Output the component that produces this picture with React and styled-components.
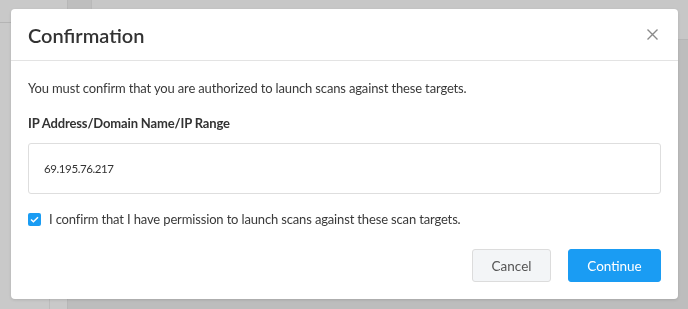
import styled, { createGlobalStyle } from "styled-components";

const GlobalStyle = createGlobalStyle`
    * { box-sizing: border-box; }
    html, body {
        margin: 0;
        width: 688px;
        height: 309px;
        overflow: hidden;
        font-family: 'Lato', 'Liberation Sans', sans-serif;
    }
`;

export default function App(){
    return(
        <>
            <GlobalStyle />
            <Page>
                <Sidebar>
                    <SideHead />
                    <SideBody>
                        <SideCol />
                        <SideCol narrow />
                    </SideBody>
                </Sidebar>
                <Main>
                    <TopBar>
                        <TopTab />
                    </TopBar>
                    <MainBody />
                </Main>
            </Page>

            <Overlay>
                <Modal>
                    <Header>
                        <Title>Confirmation</Title>
                        <Close aria-label="close">
                            <svg width="11" height="11" viewBox="0 0 11 11">
                                <path d="M0.5 0.5 L10.5 10.5 M10.5 0.5 L0.5 10.5" stroke="#8a8a8a" strokeWidth="1.4" fill="none"/>
                            </svg>
                        </Close>
                    </Header>
                    <Body>
                        <Text>You must confirm that you are authorized to launch scans against these targets.</Text>
                        <Label>IP Address/Domain Name/IP Range</Label>
                        <Targets>69.195.76.217</Targets>
                        <CheckRow>
                            <Box>
                                <svg width="9" height="7" viewBox="0 0 9 7">
                                    <path d="M1 3.5 L3.4 5.8 L8 1.2" stroke="#fff" strokeWidth="1.5" fill="none"/>
                                </svg>
                            </Box>
                            <Text>I confirm that I have permission to launch scans against these scan targets.</Text>
                        </CheckRow>
                        <Footer>
                            <Button>Cancel</Button>
                            <Button primary>Continue</Button>
                        </Footer>
                    </Body>
                </Modal>
            </Overlay>
        </>
    );
}

const Page = styled.div`
    display: flex;
    width: 688px;
    height: 309px;
    background: #bdbdbd;
`;

const Sidebar = styled.div`
    width: 68px;
    display: flex;
    flex-direction: column;
    background: #c9c9c9;
    border-right: 1px solid #b7b7b7;
`;

const SideHead = styled.div`
    height: 23px;
    border-bottom: 1px solid #b4b4b4;
`;

const SideBody = styled.div`
    flex: 1;
    display: flex;
`;

const SideCol = styled.div`
    width: ${props => props.narrow ? "17px" : "50px"};
    border-right: ${props => props.narrow ? "none" : "1px solid #bcbcbc"};
`;

const Main = styled.div`
    flex: 1;
    display: flex;
    flex-direction: column;
`;

const TopBar = styled.div`
    height: 40px;
    background: #c7c7c7;
    border-bottom: 1px solid #b6b6b6;
    display: flex;
    align-items: flex-start;
`;

const TopTab = styled.div`
    width: 24px;
    height: 9px;
    background: #bebebe;
    border-right: 1px solid #b9b9b9;
`;

const MainBody = styled.div`
    flex: 1;
`;

const Overlay = styled.div`
    position: fixed;
    inset: 0;
    padding: 9px 10px 10px 11px;
`;

const Modal = styled.div`
    width: 667px;
    background: #fff;
    border-radius: 4px;
    box-shadow: 0 1px 3px rgba(0, 0, 0, 0.12);
    display: flex;
    flex-direction: column;
`;

const Header = styled.div`
    height: 52px;
    padding: 0 20px 0 17px;
    border-bottom: 1px solid #e3e3e3;
    display: flex;
    align-items: center;
    justify-content: space-between;
`;

const Title = styled.h2`
    margin: 0;
    font-size: 20px;
    font-weight: 600;
    color: #333;
    line-height: 26px;
`;

const Close = styled.button`
    border: none;
    background: none;
    padding: 0;
    display: flex;
    cursor: pointer;
`;

const Body = styled.div`
    padding: 17px;
    display: flex;
    flex-direction: column;
`;

const Text = styled.p`
    margin: 0;
    font-size: 13px;
    line-height: 20px;
    letter-spacing: -0.15px;
    color: #3a3a3a;
`;

const Label = styled.div`
    margin-top: 15px;
    font-size: 13px;
    line-height: 20px;
    letter-spacing: -0.15px;
    font-weight: 700;
    color: #333;
`;

const Targets = styled.div`
    margin-top: 10px;
    height: 51px;
    border: 1px solid #dedede;
    border-radius: 3px;
    padding: 0 15px;
    display: flex;
    align-items: center;
    font-size: 11.5px;
    letter-spacing: -0.4px;
    color: #333;
`;

const CheckRow = styled.label`
    margin-top: 15px;
    display: flex;
    align-items: center;
    gap: 8px;
`;

const Box = styled.span`
    width: 13px;
    height: 13px;
    border-radius: 2px;
    background: #1a9cf3;
    display: flex;
    align-items: center;
    justify-content: center;
`;

const Footer = styled.div`
    margin-top: 20px;
    display: flex;
    justify-content: flex-end;
    gap: 17px;
`;

const Button = styled.button`
    height: 33px;
    width: ${props => props.primary ? "93px" : "79px"};
    padding: 0;
    border-radius: 3px;
    border: 1px solid ${props => props.primary ? "#1a9cf3" : "#dcdcdc"};
    background: ${props => props.primary ? "#1a9cf3" : "#f3f5f7"};
    color: ${props => props.primary ? "#fff" : "#555"};
    font-family: inherit;
    font-size: 13.5px;
    cursor: pointer;
`;
